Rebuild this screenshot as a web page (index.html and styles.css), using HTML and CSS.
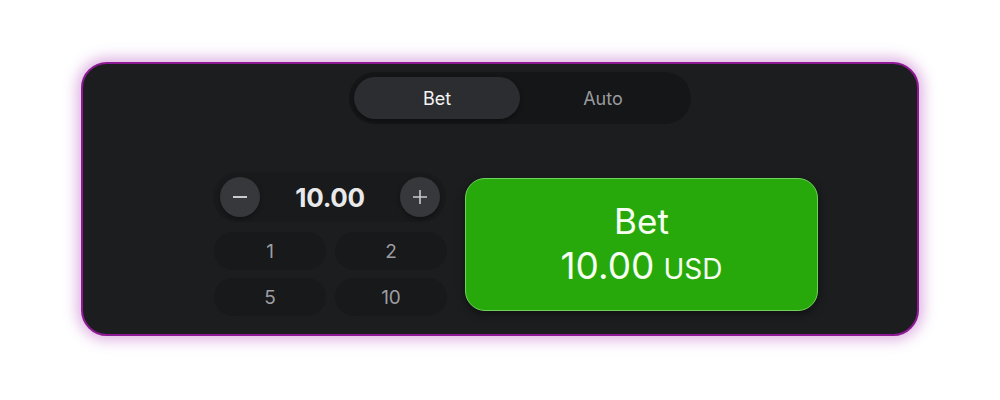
FILE: index.html
```html
<!DOCTYPE html>
<html>
<head>
<meta charset="utf-8">
<link rel="stylesheet" href="styles.css">
</head>
<body>
<div class="panel">
  <div class="tabs">
    <div class="tab active">Bet</div>
    <div class="tab">Auto</div>
  </div>
  <div class="content">
    <div class="left">
      <div class="amount">
        <div class="circle"><svg width="16" height="16" viewBox="0 0 16 16"><path d="M1 8h14" stroke="#c9cacc" stroke-width="2"/></svg></div>
        <div class="value">10.00</div>
        <div class="circle"><svg width="16" height="16" viewBox="0 0 16 16"><path d="M1 8h14M8 1v14" stroke="#c9cacc" stroke-width="1.6"/></svg></div>
      </div>
      <div class="chips">
        <div class="chip">1</div>
        <div class="chip">2</div>
        <div class="chip">5</div>
        <div class="chip">10</div>
      </div>
    </div>
    <div class="betbtn">
      <div class="bt1">Bet</div>
      <div class="bt2"><span class="num">10.00</span><span class="cur">USD</span></div>
    </div>
  </div>
</div>
</body>
</html>
```
FILE: styles.css
```css
html, body { margin: 0; padding: 0; background: #fff; }
body { width: 1000px; height: 400px; font-family: Inter, "Noto Sans", sans-serif; }
.panel {
  position: relative;
  margin: 62px 0 0 81px;
  width: 834px;
  height: 270px;
  box-sizing: content-box;
  background: #1c1d1f;
  border: 2px solid #8e1a93;
  border-radius: 26px;
  box-shadow: 0 0 14px 4px rgba(175, 70, 185, 0.42);
  display: flex;
  flex-direction: column;
  align-items: center;
}
.tabs {
  margin-top: 8px;
  margin-left: 40px;
  width: 332px;
  height: 42px;
  padding: 5px;
  background: #151618;
  border-radius: 26px;
  display: flex;
}
.tab {
  flex: 1;
  display: flex;
  align-items: center;
  justify-content: center;
  font-size: 18px;
  color: #9a9b9e;
  border-radius: 21px;
}
.tab.active {
  background: #2c2d30;
  color: #f4f4f4;
  box-shadow: 0 2px 4px rgba(0,0,0,0.4);
}
.content {
  align-self: stretch;
  margin-top: 48px;
  padding-left: 130px;
  display: flex;
  align-items: center;
  gap: 19px;
}
.left { width: 233px; display: flex; flex-direction: column; gap: 10px; }
.amount {
  height: 50px;
  padding: 0 6px 0 7px;
  display: flex;
  align-items: center;
  justify-content: space-between;
  background: #191a1c;
  border-radius: 25px;
}
.circle {
  width: 40px; height: 40px; border-radius: 50%;
  background: #37383b;
  display: flex; align-items: center; justify-content: center;
  box-shadow: 0 2px 4px rgba(0,0,0,0.35);
}
.value { font-size: 26px; font-weight: 700; color: #e9e9ea; letter-spacing: -0.3px; }
.chips {
  display: grid;
  grid-template-columns: 112px 112px;
  column-gap: 9px;
  row-gap: 8px;
  padding-left: 1px;
}
.chip {
  height: 38px;
  border-radius: 19px;
  background: #18191b;
  color: #9d9ea1;
  font-size: 19px;
  display: flex; align-items: center; justify-content: center;
}
.betbtn {
  width: 353px;
  height: 133px;
  box-sizing: border-box;
  background: #28a90b;
  border: 1px solid #6fd25a;
  border-radius: 20px;
  color: #f6fff2;
  display: flex; flex-direction: column; align-items: center; justify-content: center;
  padding-top: 3px;
  box-shadow: 0 3px 8px rgba(0,0,0,0.45);
}
.bt1 { font-size: 35px; line-height: 44px; }
.bt2 { display: flex; align-items: baseline; gap: 9px; line-height: 46px; }
.num { font-size: 37px; }
.cur { font-size: 28px; }
```
